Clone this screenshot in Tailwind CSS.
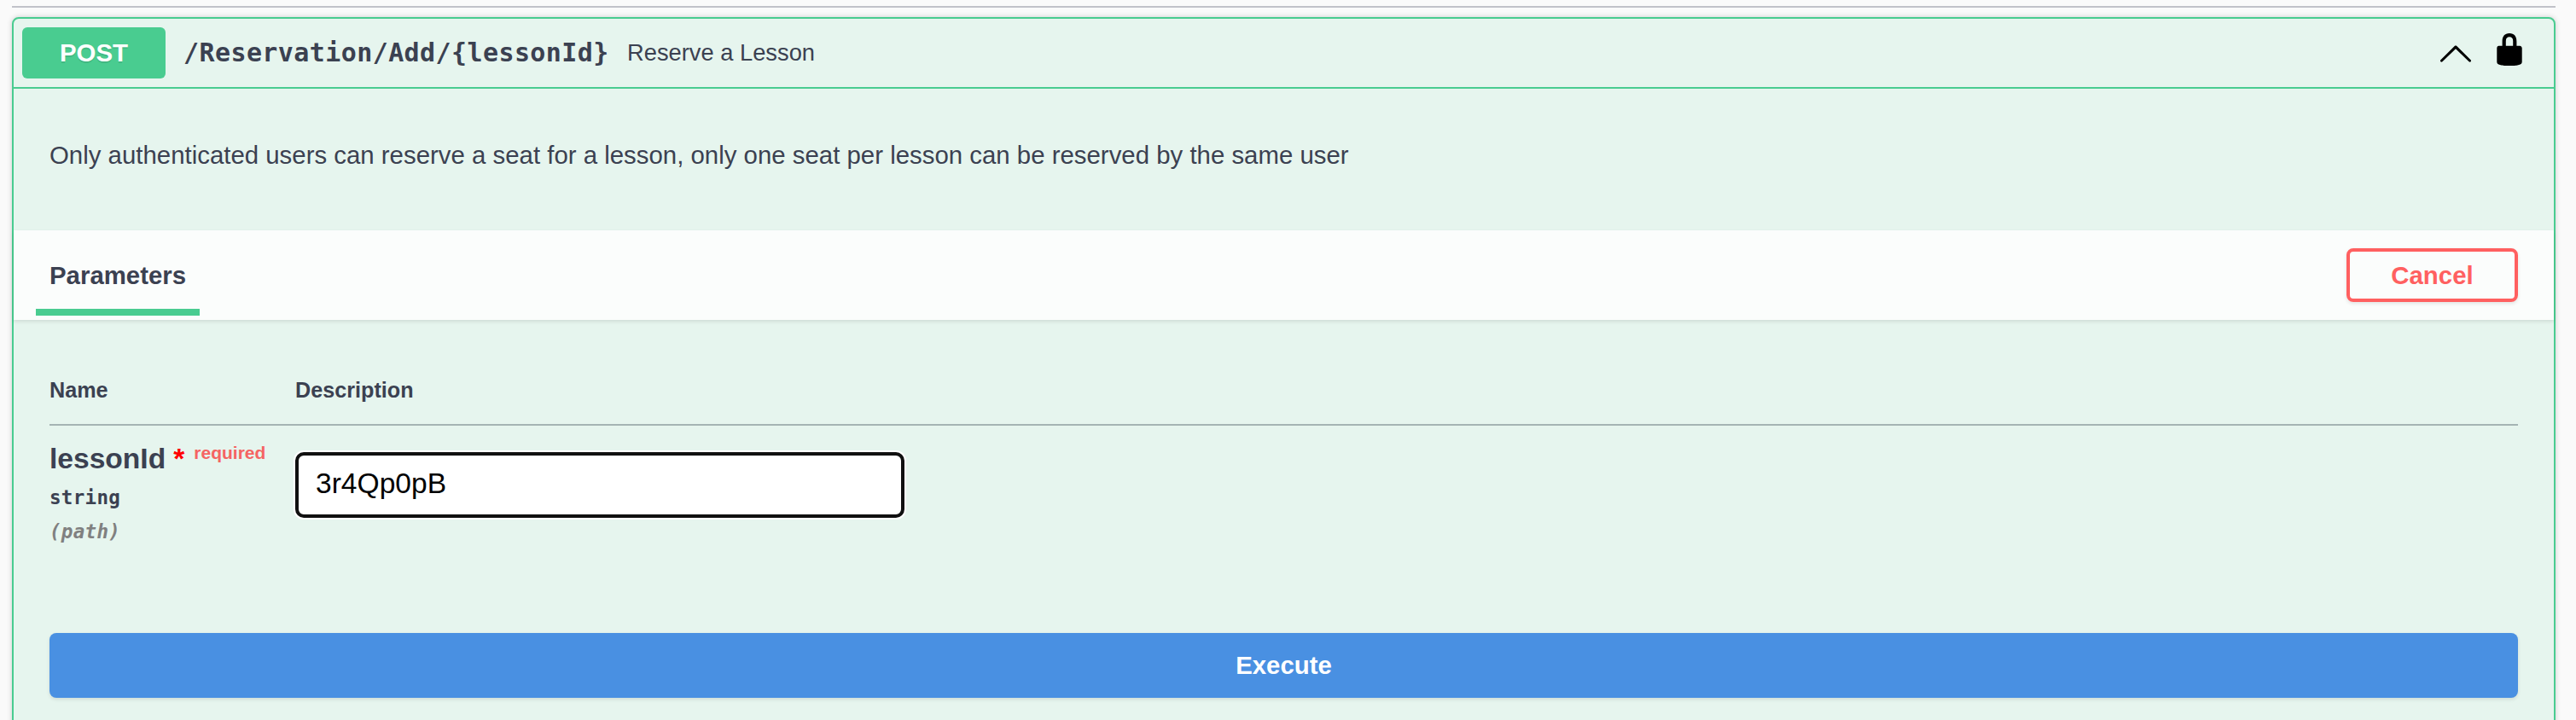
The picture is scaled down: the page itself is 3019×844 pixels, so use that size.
<!DOCTYPE html>
<html lang="en">
<head>
<meta charset="utf-8">
<title>Reservation API</title>
<script src="https://cdn.jsdelivr.net/npm/@tailwindcss/browser@4"></script>
</head>
<body class="bg-[#fafafa] text-[#3b4151] font-['Liberation_Sans',sans-serif]">
<div class="h-[844px] overflow-hidden pl-[14px] pr-[24px] pt-[7px]">
  <div class="h-[2px] bg-[#c1c2c9]"></div>
  <section class="mt-[11px] h-[900px] rounded-lg border-2 border-[#49cc90] bg-[#e6f5ee] shadow-[0_0_6px_rgba(0,0,0,0.19)]">
    <header class="flex h-[82px] items-center border-b-2 border-[#49cc90] pl-[10px] pr-[31px]">
      <span class="flex h-[60px] w-[168px] items-center justify-center rounded-md bg-[#49cc90] text-[29.4px] font-bold leading-none text-white [text-shadow:0_2px_0_rgba(0,0,0,0.1)]">POST</span>
      <span class="ml-[21px] w-[499px] whitespace-nowrap font-['DejaVu_Sans_Mono',monospace] text-[30px] font-bold leading-[40px] tracking-[0.41px]">/Reservation/Add/{lessonId}</span>
      <span class="ml-[21px] text-[27.3px] leading-[40px]">Reserve a Lesson</span>
      <svg class="ml-auto h-[42px] w-[42px]" viewBox="0 0 20 20"><path d="M 17.418 14.908 C 17.69 15.176 18.127 15.176 18.397 14.908 C 18.667 14.64 18.668 14.207 18.397 13.939 L 10.489 6.109 C 10.219 5.841 9.782 5.841 9.51 6.109 L 1.602 13.939 C 1.332 14.207 1.332 14.64 1.602 14.908 C 1.873 15.176 2.311 15.176 2.581 14.908 L 10 7.767 L 17.418 14.908 Z"/></svg>
      <svg class="mb-[8px] ml-[21px] h-[42px] w-[42px]" viewBox="0 0 20 20"><path d="M15.8 8H14V5.6C14 2.703 12.665 1 10 1 7.334 1 6 2.703 6 5.6V8H4c-.553 0-1 .646-1 1.199V17c0 .549.428 1.139.951 1.307l1.197.387C5.672 18.861 6.55 19 7.1 19h5.8c.549 0 1.428-.139 1.951-.307l1.196-.387c.524-.167.953-.757.953-1.306V9.199C17 8.646 16.352 8 15.8 8zM12 8H8V5.199C8 3.754 8.797 3 10 3c1.203 0 2 .754 2 2.199V8z"/></svg>
    </header>
    <p class="h-[166px] px-[42px] pt-[57px] text-[29.4px] leading-[42px]">Only authenticated users can reserve a seat for a lesson, only one seat per lesson can be reserved by the same user</p>
    <div class="flex h-[105px] items-center justify-between bg-[#fbfdfc] pl-[26px] pr-[42px] shadow-[0_2px_4px_rgba(0,0,0,0.1)]">
      <div class="h-full w-[192px] pt-[35px]">
        <h4 class="pl-[16px] text-[29.4px] font-bold leading-[36px]">Parameters</h4>
        <div class="mt-[21px] h-2 bg-[#49cc90]"></div>
      </div>
      <button class="h-[63px] w-[201px] rounded-lg border-4 border-[#ff6060] text-[29.4px] font-bold leading-none text-[#ff6060] shadow-[0_2px_4px_rgba(0,0,0,0.1)]">Cancel</button>
    </div>
    <div class="px-[42px] pt-[65px]">
      <div class="flex border-b-2 border-[#a5b4b3] pb-[23px] text-[25.2px] font-bold leading-[34px]">
        <div class="w-[288px]">Name</div>
        <div>Description</div>
      </div>
      <div class="flex h-[243px]">
        <div class="w-[288px] pt-[19px]">
          <div class="flex whitespace-nowrap text-[33.6px] font-bold leading-[40px]">
            <span>lessonId</span>
            <span class="ml-[9px] text-[#ff0000]">*</span>
            <span class="ml-[11px] text-[21px] leading-[25px] text-[#f56463]">required</span>
          </div>
          <div class="mt-[10px] font-['DejaVu_Sans_Mono',monospace] text-[22.5px] font-bold leading-[30px] tracking-[0.31px]">string</div>
          <div class="mt-[10px] font-['DejaVu_Sans_Mono',monospace] text-[22.5px] font-bold italic leading-[30px] tracking-[0.31px] text-[#808080]">(path)</div>
        </div>
        <div class="pt-[31px]">
          <input type="text" value="3r4Qp0pB" class="block h-[77px] w-[714px] rounded-[10px] border-4 border-[#101010] bg-white px-[20px] pb-[3px] text-[33.6px] text-black shadow-[0_0_0_2px_#fff]">
        </div>
      </div>
      <button class="block h-[76px] w-full rounded-lg bg-[#4990e2] text-[29.4px] font-bold text-white shadow-[0_2px_4px_rgba(0,0,0,0.1)]">Execute</button>
    </div>
  </section>
</div>
</body>
</html>
